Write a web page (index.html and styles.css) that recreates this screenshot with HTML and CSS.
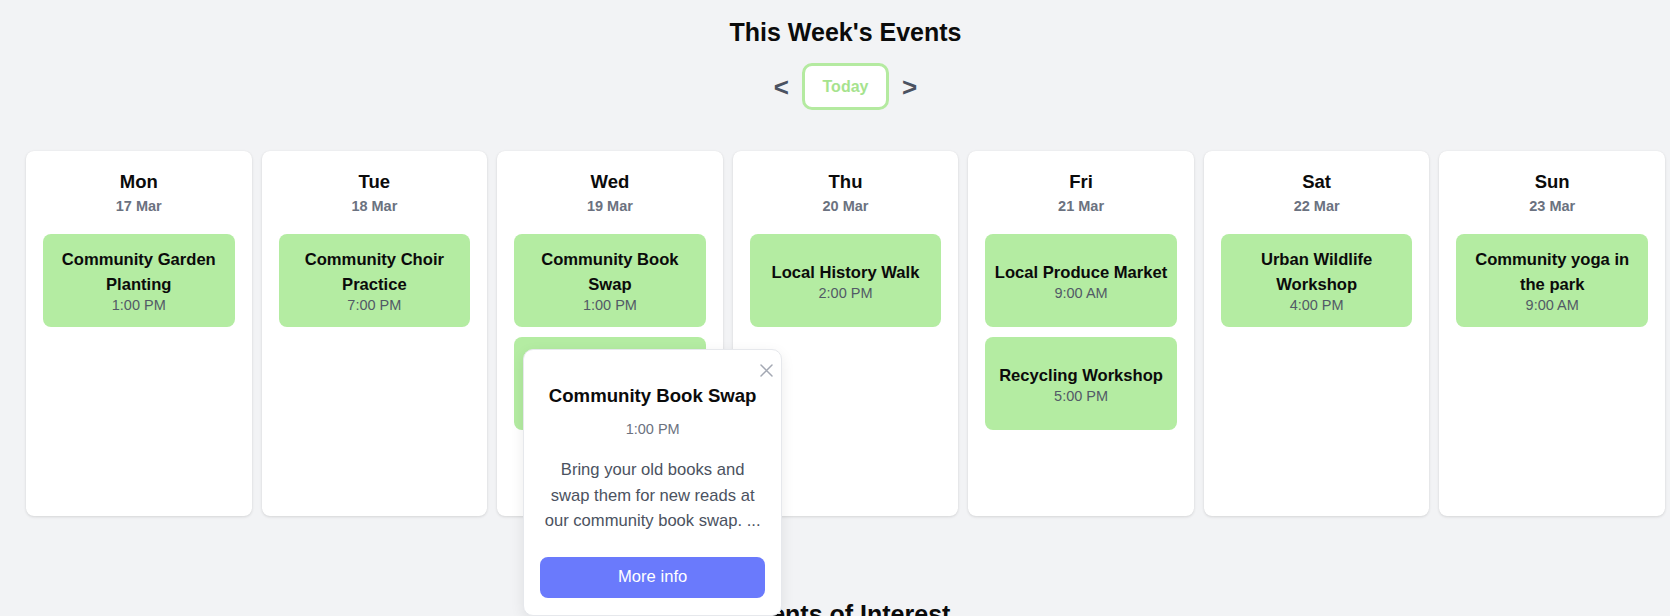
FILE: index.html
```html
<!DOCTYPE html>
<html lang="en">
<head>
<meta charset="utf-8">
<title>This Week's Events</title>
<link rel="stylesheet" href="styles.css">
</head>
<body>
<div class="page">
  <h1 class="title">This Week's Events</h1>
  <div class="nav">
    <button class="arrow">&lt;</button>
    <button class="today">Today</button>
    <button class="arrow">&gt;</button>
  </div>

  <div class="week">
    <div class="day">
      <div class="day-name">Mon</div>
      <div class="day-date">17 Mar</div>
      <div class="events">
        <div class="event"><div class="ev-title">Community Garden Planting</div><div class="ev-time">1:00 PM</div></div>
      </div>
    </div>
    <div class="day">
      <div class="day-name">Tue</div>
      <div class="day-date">18 Mar</div>
      <div class="events">
        <div class="event"><div class="ev-title">Community Choir Practice</div><div class="ev-time">7:00 PM</div></div>
      </div>
    </div>
    <div class="day day-open">
      <div class="day-name">Wed</div>
      <div class="day-date">19 Mar</div>
      <div class="events">
        <div class="event"><div class="ev-title">Community Book Swap</div><div class="ev-time">1:00 PM</div></div>
        <div class="event event-covered" aria-hidden="true"></div>
      </div>
      <div class="popover">
        <button class="close" aria-label="Close">
          <svg width="13" height="13" viewBox="0 0 13 13"><path d="M1 1L12 12M12 1L1 12" stroke="#a3a8b3" stroke-width="1.5" fill="none" stroke-linecap="round"/></svg>
        </button>
        <div class="pop-title">Community Book Swap</div>
        <div class="pop-time">1:00 PM</div>
        <p class="pop-desc">Bring your old books and swap them for new reads at our community book swap. ...</p>
        <button class="more">More info</button>
      </div>
    </div>
    <div class="day">
      <div class="day-name">Thu</div>
      <div class="day-date">20 Mar</div>
      <div class="events">
        <div class="event"><div class="ev-title">Local History Walk</div><div class="ev-time">2:00 PM</div></div>
      </div>
    </div>
    <div class="day">
      <div class="day-name">Fri</div>
      <div class="day-date">21 Mar</div>
      <div class="events">
        <div class="event"><div class="ev-title">Local Produce Market</div><div class="ev-time">9:00 AM</div></div>
        <div class="event"><div class="ev-title">Recycling Workshop</div><div class="ev-time">5:00 PM</div></div>
      </div>
    </div>
    <div class="day">
      <div class="day-name">Sat</div>
      <div class="day-date">22 Mar</div>
      <div class="events">
        <div class="event"><div class="ev-title">Urban Wildlife Workshop</div><div class="ev-time">4:00 PM</div></div>
      </div>
    </div>
    <div class="day">
      <div class="day-name">Sun</div>
      <div class="day-date">23 Mar</div>
      <div class="events">
        <div class="event"><div class="ev-title">Community yoga in the park</div><div class="ev-time">9:00 AM</div></div>
      </div>
    </div>
  </div>

  <h2 class="section-title">Events of Interest</h2>
</div>
</body>
</html>
```

FILE: styles.css
```css
* { box-sizing: border-box; }

html, body {
  margin: 0;
  padding: 0;
  background: #f2f3f5;
  font-family: "Liberation Sans", Arial, sans-serif;
  color: #111;
}

.page {
  padding: 18px 5px 0 26px;
}

.title {
  margin: 0;
  text-align: center;
  font-size: 25px;
  line-height: 29px;
  font-weight: 700;
  color: #0b0b0b;
}

.nav {
  margin-top: 16px;
  display: flex;
  justify-content: center;
  align-items: center;
  gap: 13px;
}

.arrow {
  border: none;
  background: none;
  padding: 0;
  font-family: inherit;
  font-weight: 700;
  font-size: 26px;
  line-height: 30px;
  color: #4b5261;
  cursor: pointer;
}

.today {
  width: 87px;
  height: 47px;
  background: #fff;
  border: 3px solid #b4eaa0;
  border-radius: 10px;
  font-family: inherit;
  font-weight: 700;
  font-size: 16px;
  color: #a6e38e;
  padding: 0;
  cursor: pointer;
}

.week {
  margin-top: 41px;
  display: grid;
  grid-template-columns: repeat(7, 1fr);
  gap: 10px;
}

.day {
  height: 365px;
  background: #fff;
  border-radius: 8px;
  box-shadow: 0 1px 3px rgba(0, 0, 0, 0.12), 0 0 1px rgba(0, 0, 0, 0.06);
  padding: 20px 17px;
  text-align: center;
}

.day-open { position: relative; }

.day-name {
  font-size: 18.5px;
  font-weight: 700;
  line-height: 21px;
  color: #0b0b0b;
}

.day-date {
  margin-top: 6px;
  font-size: 14.5px;
  font-weight: 700;
  line-height: 16px;
  color: #6b7280;
}

.events {
  margin-top: 20px;
  display: flex;
  flex-direction: column;
  gap: 10px;
}

.event {
  height: 93px;
  background: #b4eca2;
  border-radius: 8px;
  padding: 0 7px;
  display: flex;
  flex-direction: column;
  justify-content: center;
}

.ev-title {
  font-size: 16.6px;
  font-weight: 700;
  line-height: 25px;
  color: #0b0b0b;
}

.ev-time {
  font-size: 14.5px;
  line-height: 17px;
  color: #525a66;
}

.popover {
  position: absolute;
  left: 26px;
  top: 198px;
  z-index: 10;
  width: 259px;
  height: 267px;
  background: #fff;
  border: 1px solid #e6e8ec;
  border-radius: 10px;
  box-shadow: 0 4px 14px rgba(0, 0, 0, 0.08);
  padding: 35px 16px 16px;
  text-align: center;
}

.close {
  position: absolute;
  top: 14px;
  right: 8px;
  width: 13px;
  height: 13px;
  padding: 0;
  border: none;
  background: none;
  cursor: pointer;
  display: flex;
}

.pop-title {
  font-size: 18.6px;
  font-weight: 700;
  line-height: 22px;
  color: #0b0b0b;
}

.pop-time {
  margin-top: 14px;
  font-size: 14.5px;
  line-height: 17px;
  color: #6b7280;
}

.pop-desc {
  width: 222px;
  margin: 19px auto 0;
  font-size: 16.6px;
  line-height: 25.6px;
  color: #4b5260;
}

.more {
  margin-top: 23px;
  width: 225px;
  height: 41px;
  border: none;
  border-radius: 8px;
  background: #6a7afc;
  color: #fff;
  font-family: inherit;
  font-size: 16.6px;
  cursor: pointer;
}

.section-title {
  margin: 84px 0 0;
  text-align: center;
  font-size: 25px;
  line-height: 29px;
  font-weight: 700;
  color: #0b0b0b;
}
```
